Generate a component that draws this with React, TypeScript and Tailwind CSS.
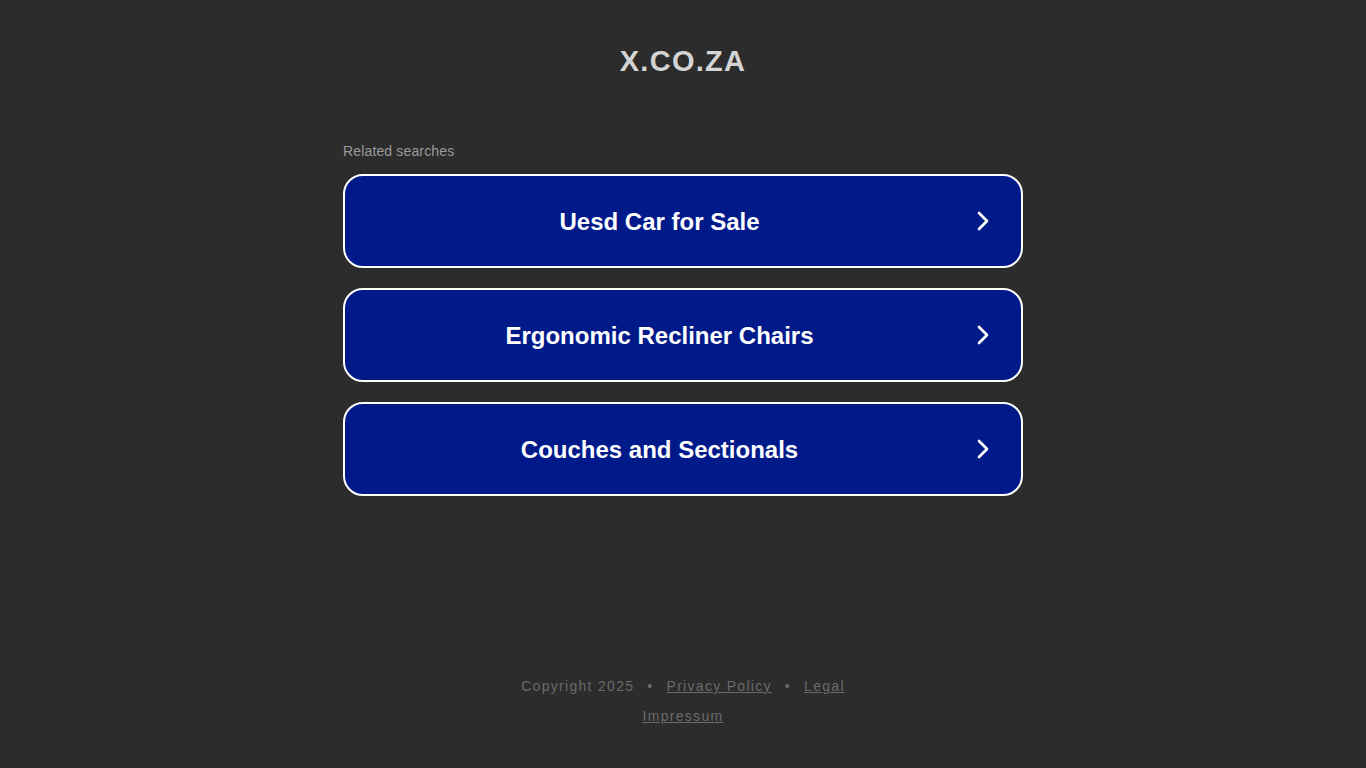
import { ChevronRight } from 'lucide-react'

const SEARCHES = ['Uesd Car for Sale', 'Ergonomic Recliner Chairs', 'Couches and Sectionals']

export default function App() {
  return (
    <div
      className="min-h-[768px] bg-[#2c2c2c] flex flex-col items-center"
      style={{ fontFamily: '"Liberation Sans", Arial, sans-serif' }}
    >
      <h1 className="mt-[43px] text-[29px] leading-[36px] font-bold tracking-[1.3px] text-[#d4d4d4]">X.CO.ZA</h1>

      <div className="w-[680px] mt-[62px]">
        <div className="text-[14px] leading-[20px] tracking-[0.15px] text-[#9a9a9a] mb-[13px]">Related searches</div>
        <div className="flex flex-col gap-[20px]">
          {SEARCHES.map((s) => (
            <a
              key={s}
              href="#"
              className="h-[94px] rounded-[20px] border-2 border-white bg-[#011a8a] flex items-center pl-[7px] pr-[22px]"
            >
              <span className="flex-1 text-center text-[24px] font-bold text-white pt-[2px]">{s}</span>
              <ChevronRight className="w-[32px] h-[32px] text-white" strokeWidth={2} />
            </a>
          ))}
        </div>
      </div>

      <div className="mt-auto mb-[42px] flex flex-col items-center gap-[10px] text-[14px] leading-[20px] tracking-[1.3px] text-[#6a6a6a]">
        <div className="flex items-center gap-[13px]">
          <span>Copyright 2025</span>
          <span>•</span>
          <a href="#" className="underline">Privacy Policy</a>
          <span>•</span>
          <a href="#" className="underline">Legal</a>
        </div>
        <a href="#" className="underline">Impressum</a>
      </div>
    </div>
  )
}
